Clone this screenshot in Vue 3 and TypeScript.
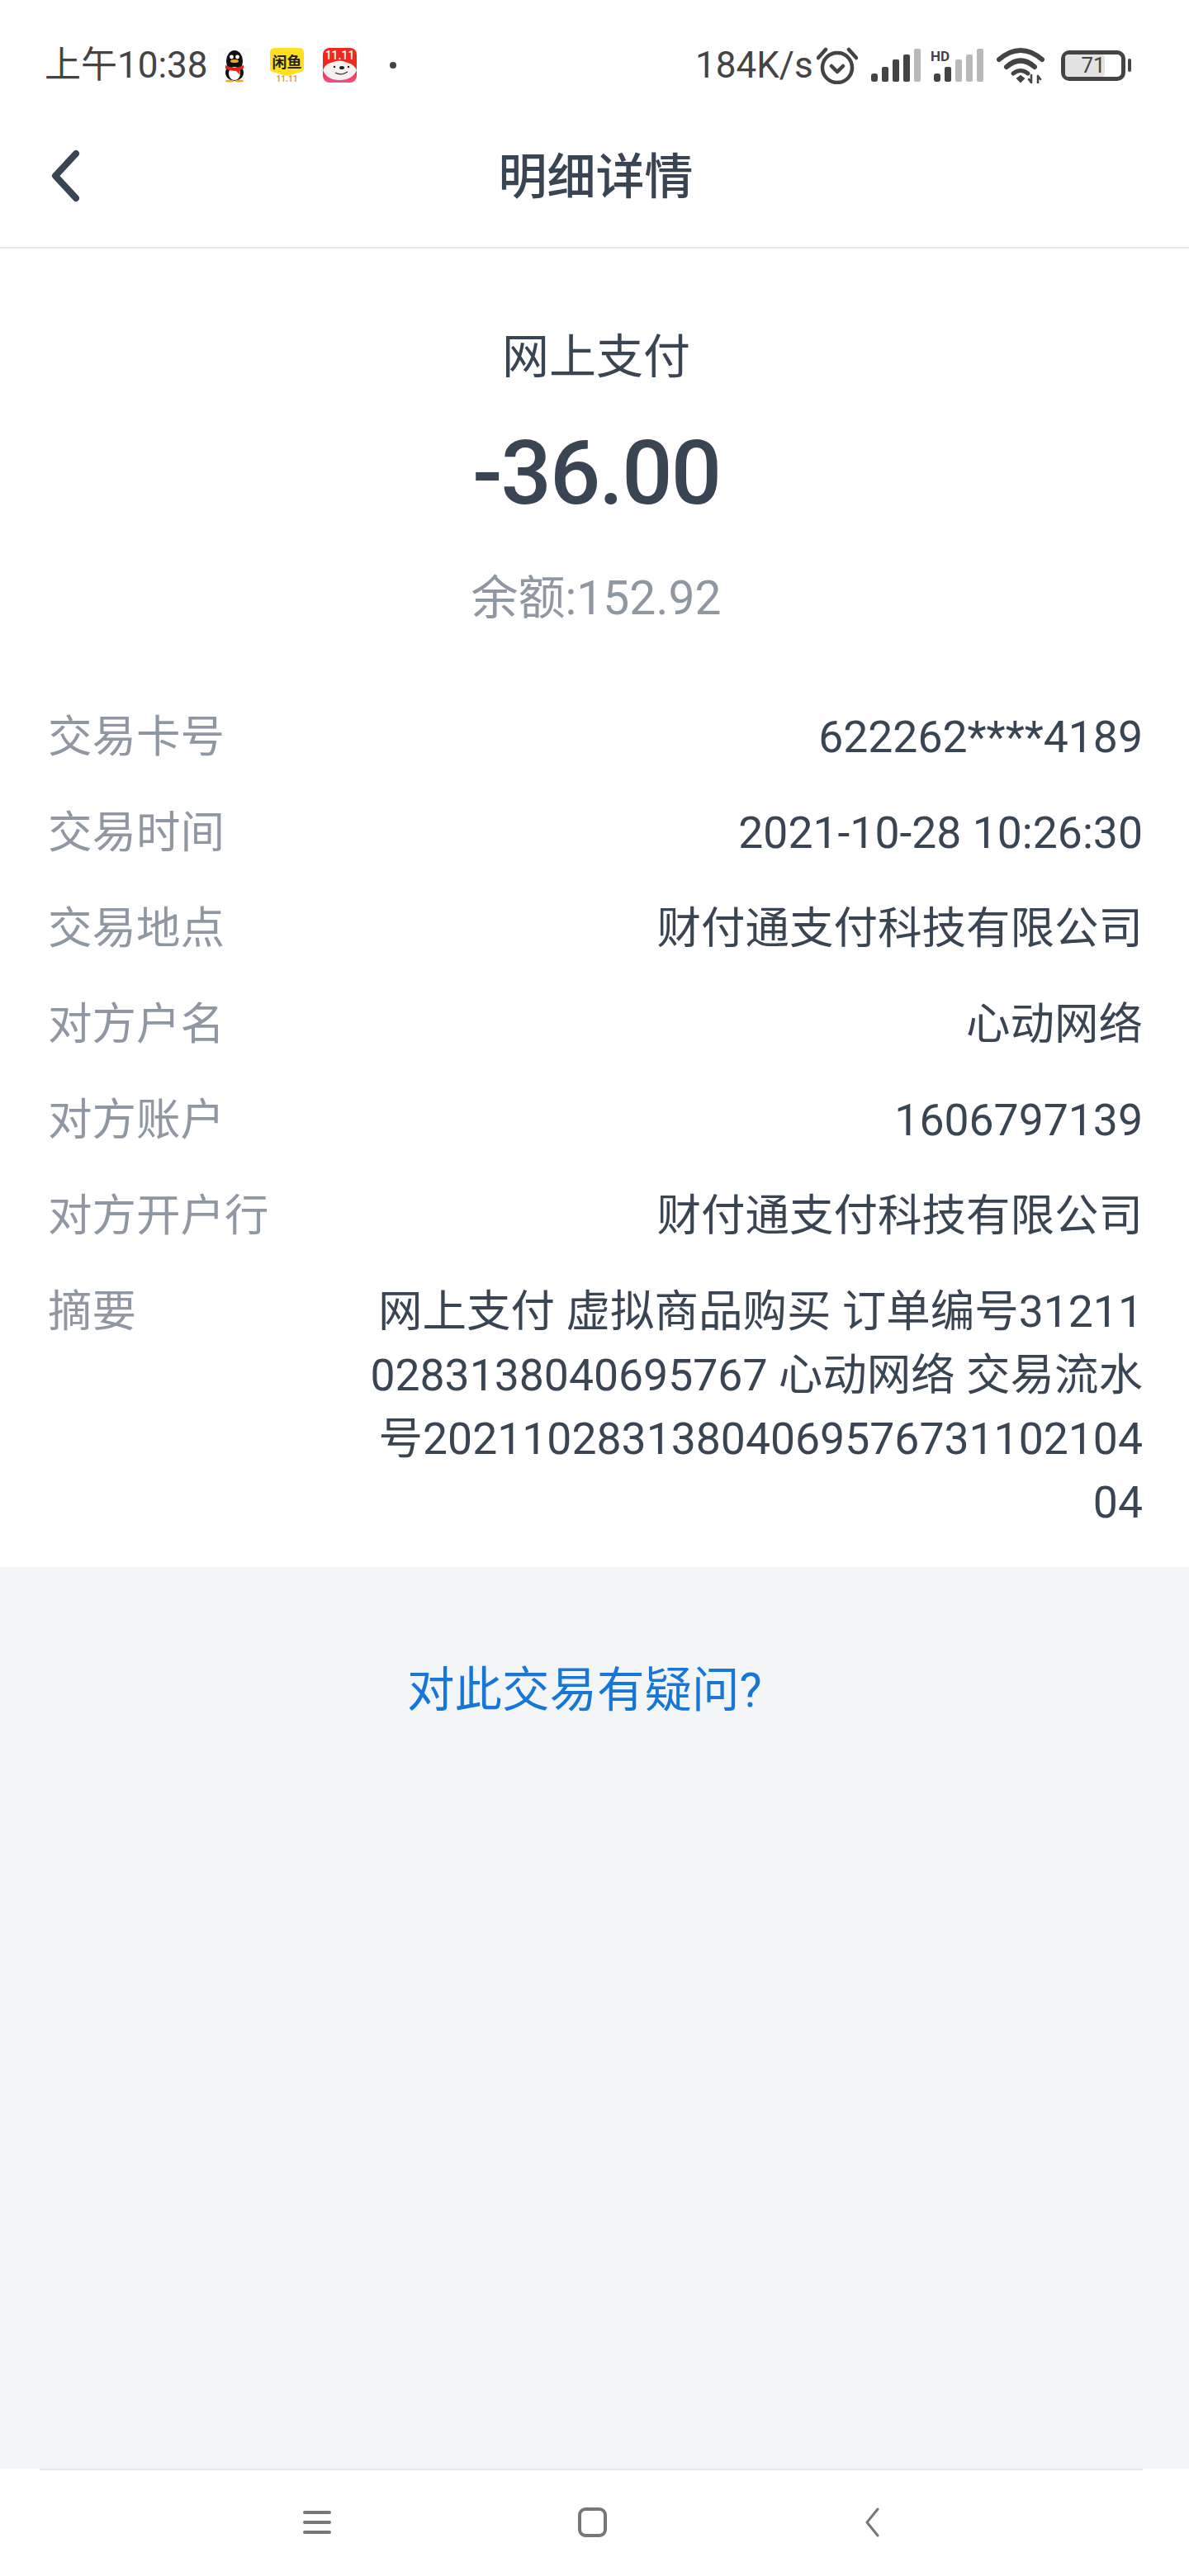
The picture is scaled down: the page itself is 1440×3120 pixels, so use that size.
<template>
  <div class="page">
    <div class="status-bar">
      <span class="time">上午10:38</span>
      <svg class="notify qq" width="40" height="42" viewBox="0 0 40 42">
        <rect width="40" height="42" rx="3" fill="#fbfbfb" />
        <ellipse cx="20" cy="16" rx="10" ry="13" fill="#111" />
        <ellipse cx="20" cy="30" rx="11" ry="10" fill="#111" />
        <ellipse cx="20" cy="31" rx="7" ry="8" fill="#fff" />
        <circle cx="16.5" cy="11" r="2.4" fill="#fff" />
        <circle cx="23.5" cy="11" r="2.4" fill="#fff" />
        <ellipse cx="20" cy="16" rx="5" ry="2" fill="#f5a623" />
        <path d="M9 21 Q20 27 31 21 L31 25 Q26 27 26 28 L27 33 L22 28 Q14 28 9 25 Z" fill="#e2231a" />
        <ellipse cx="14" cy="40" rx="5" ry="1.6" fill="#f5a623" />
        <ellipse cx="26" cy="40" rx="5" ry="1.6" fill="#f5a623" />
      </svg>
      <svg class="notify xy" width="41" height="42" viewBox="0 0 41 42">
        <path d="M6 0 H35 Q41 0 41 6 V25 Q41 28 38 29 L20.5 34 L3 29 Q0 28 0 25 V6 Q0 0 6 0 Z" fill="#ffdf1f" />
        <text x="20.5" y="24" class="xy-name">闲鱼</text>
        <text x="20.5" y="41" class="xy-date">11.11</text>
      </svg>
      <svg class="notify jd" width="41" height="42" viewBox="0 0 41 42">
        <defs>
          <linearGradient id="jdBg" x1="0" y1="0" x2="0" y2="1">
            <stop offset="0.55" stop-color="#f0281e" />
            <stop offset="1" stop-color="#f3508a" />
          </linearGradient>
        </defs>
        <rect width="41" height="42" rx="8" fill="url(#jdBg)" />
        <text x="20.5" y="14" class="jd-date">11.11</text>
        <path d="M0 27 Q3 19 10 18 Q20 13 30 18 Q38 20 41 27 Q36 39 20 39 Q5 39 0 27 Z" fill="#f6f1f1" />
        <ellipse cx="23" cy="24" rx="3" ry="2" fill="#222" />
        <circle cx="14" cy="23" r="1.2" fill="#222" />
        <circle cx="31" cy="23" r="1.2" fill="#222" />
        <path d="M15 30 Q22 34 30 29" fill="none" stroke="#333" stroke-width="1.2" />
      </svg>
      <span class="dot"></span>
      <span class="speed">184K/s</span>
      <svg class="alarm" width="50" height="46" viewBox="0 0 50 46" fill="none" stroke="#444" stroke-width="4.5" stroke-linecap="round" stroke-linejoin="round">
        <circle cx="25" cy="26" r="18" />
        <path d="M18 24 L25 31 L32 24" />
        <path d="M2 14 L11 4" />
        <path d="M48 14 L39 4" />
      </svg>
      <svg class="signal" width="60" height="40" viewBox="0 0 60 40">
        <rect x="0" y="30" width="8" height="10" rx="3" fill="#444" />
        <rect x="13" y="22" width="8" height="18" rx="2" fill="#444" />
        <rect x="26" y="13" width="8" height="27" rx="2" fill="#444" />
        <rect x="39" y="7" width="8" height="33" rx="2" fill="#444" />
        <rect x="52" y="0" width="8" height="40" rx="2" fill="#b9b9b9" />
      </svg>
      <svg class="signal-hd" width="64" height="40" viewBox="0 0 64 40">
        <text x="0" y="15" class="hd">HD</text>
        <rect x="4" y="30" width="8" height="10" rx="3" fill="#444" />
        <rect x="17" y="22" width="8" height="18" rx="2" fill="#444" />
        <rect x="30" y="13" width="8" height="27" rx="2" fill="#b9b9b9" />
        <rect x="43" y="7" width="8" height="33" rx="2" fill="#b9b9b9" />
        <rect x="56" y="0" width="8" height="40" rx="2" fill="#b9b9b9" />
      </svg>
      <svg class="wifi" width="58" height="44" viewBox="0 0 58 44" fill="none" stroke="#444" stroke-width="6" stroke-linecap="round">
        <path d="M3 15 Q29 -7 55 15" />
        <path d="M12 24 Q29 9 46 24" />
        <path d="M20 32 Q29 25 38 32" stroke-width="5" />
        <path d="M25 38 L29 42 L33 38 L29 35 Z" fill="#444" stroke-width="2" />
        <path d="M42 34 V43 M39 39 L42 43 M50 44 V35 M50 35 L53 39" stroke-width="2.5" />
      </svg>
      <div class="battery">
        <div class="battery-body">
          <div class="battery-fill"></div>
          <span class="battery-num">71</span>
        </div>
        <div class="battery-cap"></div>
      </div>
    </div>

    <header class="nav-bar">
      <svg class="back" width="36" height="64" viewBox="0 0 36 64" fill="none">
        <path d="M31 5 L6 32 L31 59" stroke="#3a4553" stroke-width="8" stroke-linecap="round" stroke-linejoin="round" />
      </svg>
      <h1 class="nav-title">明细详情</h1>
    </header>

    <section class="detail">
      <div class="summary">
        <div class="kind">网上支付</div>
        <div class="amount">-36.00</div>
        <div class="balance">余额:152.92</div>
      </div>
      <div class="rows">
        <div v-for="row in rows" :key="row.label" class="row">
          <span class="label">{{ row.label }}</span>
          <span class="value">{{ row.value }}</span>
        </div>
      </div>
    </section>

    <main class="rest">
      <a class="question">对此交易有疑问?</a>
    </main>

    <footer class="system-nav">
      <div class="menu-icon"><i></i><i></i><i></i></div>
      <div class="home-icon"></div>
      <svg class="sys-back" width="18" height="36" viewBox="0 0 18 36" fill="none">
        <path d="M16 2 L3 18 L16 34" stroke="#777" stroke-width="3" stroke-linecap="round" stroke-linejoin="round" />
      </svg>
    </footer>
  </div>
</template>

<script setup lang="ts">
interface Row {
  label: string
  value: string
}

const rows: Row[] = [
  { label: '交易卡号', value: '622262****4189' },
  { label: '交易时间', value: '2021-10-28 10:26:30' },
  { label: '交易地点', value: '财付通支付科技有限公司' },
  { label: '对方户名', value: '心动网络' },
  { label: '对方账户', value: '1606797139' },
  { label: '对方开户行', value: '财付通支付科技有限公司' },
  {
    label: '摘要',
    value: '网上支付 虚拟商品购买 订单编号312110283138040695767 心动网络 交易流水号2021102831380406957673110210404'
  }
]
</script>

<style>
body {
  margin: 0;
  background: #fff;
}
</style>

<style scoped>
.page {
  display: flex;
  flex-direction: column;
  width: 1440px;
  height: 3120px;
  font-family: Roboto, "Noto Sans CJK SC", sans-serif;
  color: #3a4553;
  background: #fff;
}

.status-bar {
  display: flex;
  align-items: center;
  height: 158px;
  padding-left: 54px;
  box-sizing: border-box;
  color: #444;
}

.time {
  width: 210px;
  font-size: 44px;
  line-height: 52px;
}

.notify {
  flex: none;
}

.xy {
  margin-left: 23px;
}

.jd {
  margin-left: 23px;
}

.xy-name {
  font-size: 18px;
  font-weight: 700;
  text-anchor: middle;
  fill: #222;
}

.xy-date {
  font-size: 10px;
  font-weight: 700;
  text-anchor: middle;
  fill: #e0a030;
}

.jd-date {
  font-size: 14px;
  font-weight: 500;
  text-anchor: middle;
  fill: #fff;
}

.dot {
  width: 8px;
  height: 8px;
  margin-left: 40px;
  border-radius: 50%;
  background: #444;
}

.speed {
  width: 140px;
  margin-left: 362px;
  font-size: 44px;
  line-height: 52px;
}

.alarm {
  margin-left: 7px;
}

.signal {
  margin-left: 16px;
}

.signal-hd {
  margin-left: 12px;
}

.hd {
  font-size: 17px;
  font-weight: 700;
  fill: #444;
}

.wifi {
  margin-left: 16px;
}

.battery {
  display: flex;
  align-items: center;
  margin-left: 20px;
}

.battery-body {
  position: relative;
  width: 78px;
  height: 37px;
  box-sizing: border-box;
  border: 5px solid #444;
  border-radius: 10px;
}

.battery-fill {
  width: 71%;
  height: 100%;
  border-radius: 4px;
  background: #e2e2e2;
}

.battery-num {
  position: absolute;
  inset: 0;
  font-size: 26px;
  line-height: 27px;
  text-align: center;
  color: #444;
}

.battery-cap {
  width: 4px;
  height: 16px;
  margin-left: 3px;
  border-radius: 2px;
  background: #444;
}

.nav-bar {
  position: relative;
  display: flex;
  align-items: center;
  justify-content: center;
  height: 143px;
  padding-bottom: 28px;
  box-sizing: border-box;
  border-bottom: 2px solid #e6e7e9;
}

.back {
  position: absolute;
  left: 61px;
  top: 23px;
}

.nav-title {
  margin: 0;
  padding-left: 3px;
  font-size: 59px;
  font-weight: 500;
  line-height: 80px;
}

.detail {
  padding: 96px 56px 21px 58px;
  background: #fff;
}

.summary {
  display: flex;
  flex-direction: column;
  align-items: center;
  padding-left: 2px;
}

.kind {
  font-size: 57px;
  line-height: 72px;
}

.amount {
  margin-top: 50px;
  font-size: 108px;
  font-weight: 500;
  line-height: 108px;
  letter-spacing: -2px;
}

.balance {
  margin-top: 60px;
  font-size: 57px;
  line-height: 76px;
  color: #8f97a3;
}

.rows {
  margin-top: 71px;
  display: flex;
  flex-direction: column;
}

.row {
  display: flex;
  justify-content: space-between;
  gap: 100px;
  padding: 19.5px 0;
  font-size: 53.5px;
  line-height: 77px;
}

.label {
  flex: none;
  color: #8f97a3;
}

.value {
  max-width: 938px;
  text-align: right;
  word-break: break-all;
}

.rest {
  flex: 1;
  background: #f4f5f7;
  padding-top: 112px;
}

.question {
  display: block;
  margin-left: 493px;
  font-size: 57.5px;
  line-height: 76px;
  color: #1677d9;
}

.system-nav {
  position: relative;
  height: 130px;
  box-sizing: border-box;
  display: flex;
  align-items: center;
  background: #fff;
}

/* the divider stops short of both screen edges */
.system-nav::before {
  content: "";
  position: absolute;
  top: 0;
  left: 48px;
  right: 56px;
  height: 2px;
  background: #e6e8eb;
}

.menu-icon {
  display: flex;
  flex-direction: column;
  gap: 8px;
  width: 34px;
  margin-left: 367px;
}

.menu-icon i {
  display: block;
  height: 4px;
  border-radius: 2px;
  background: #777;
}

.home-icon {
  width: 35px;
  height: 36px;
  margin-left: 299px;
  box-sizing: border-box;
  border: 4px solid #777;
  border-radius: 9px;
}

.sys-back {
  margin-left: 312px;
}
</style>
